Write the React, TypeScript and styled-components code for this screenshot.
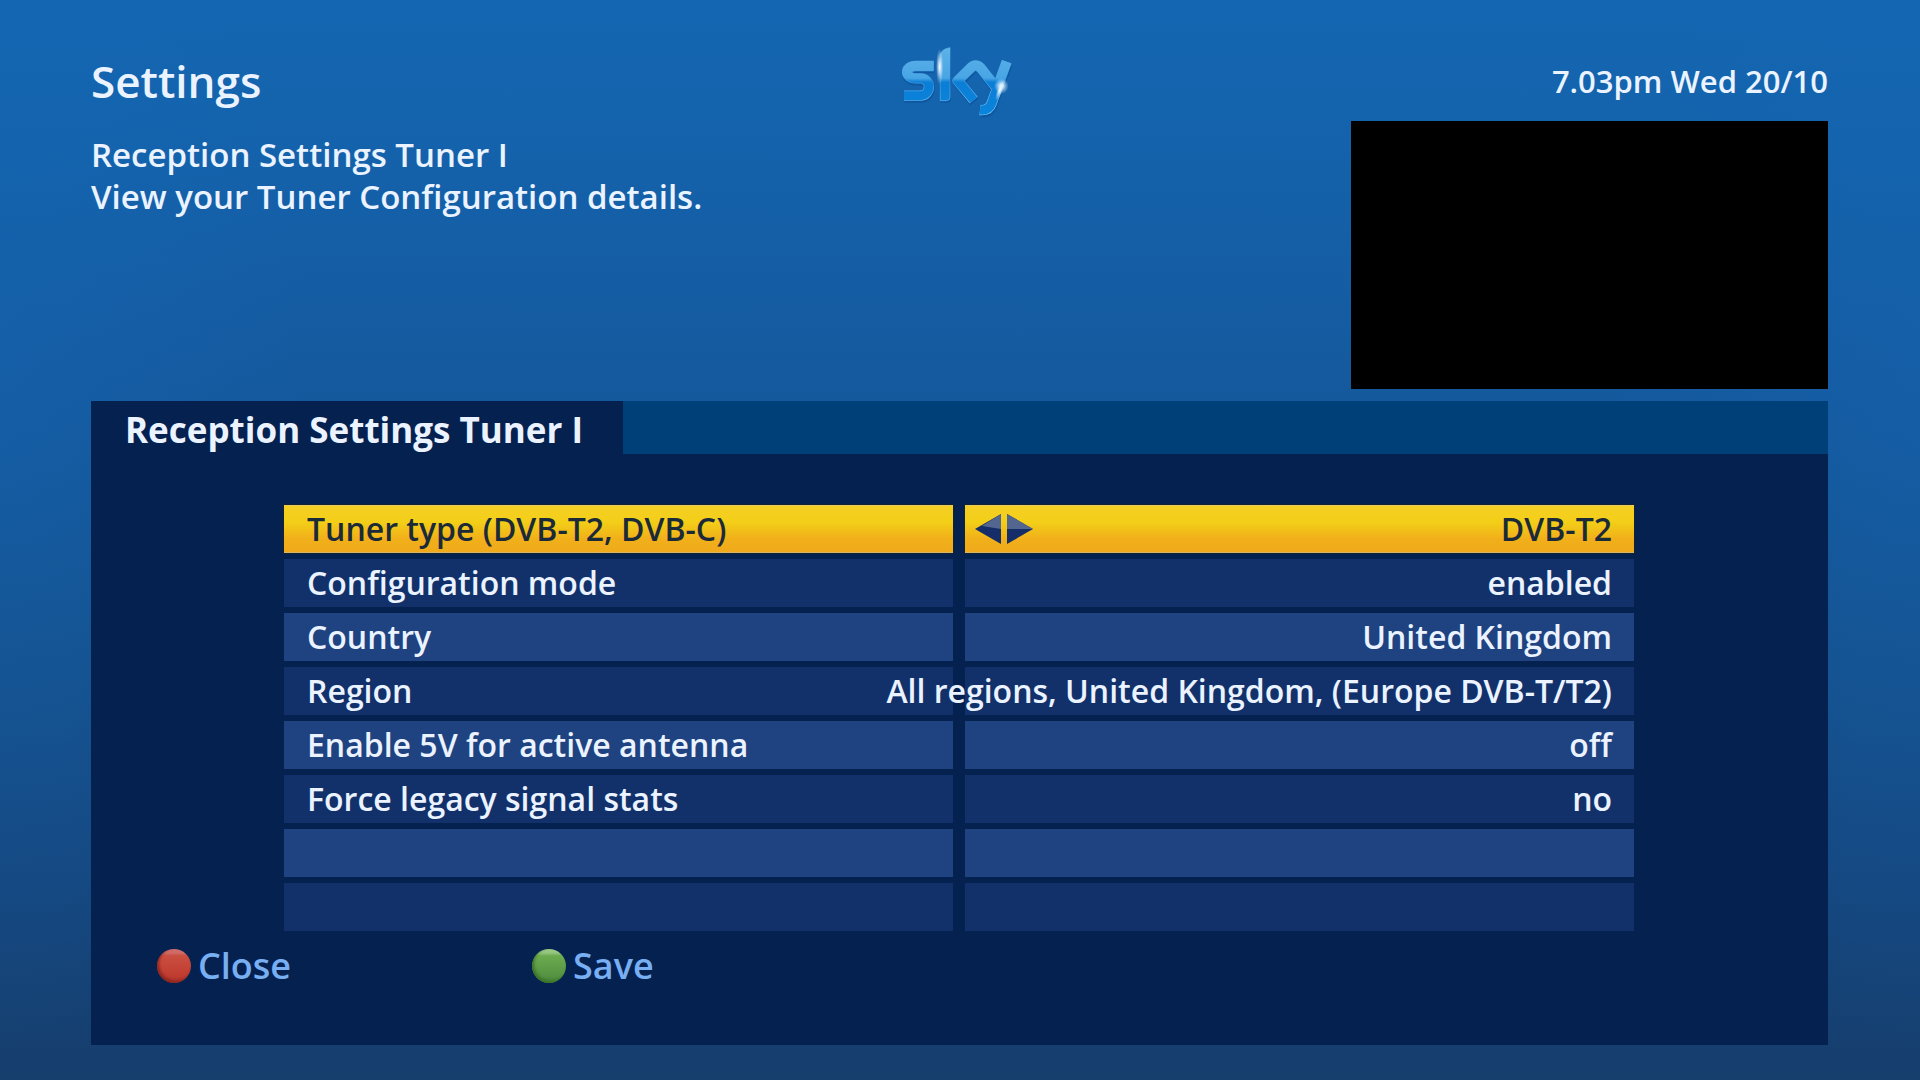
import React, { useState } from "react";
import styled, { createGlobalStyle } from "styled-components";

const GlobalStyle = createGlobalStyle`
  * { box-sizing: border-box; }
  body { margin: 0; background: #163f70; }
`;

const Screen = styled.div`
  min-height: 100vh;
  display: flex;
  flex-direction: column;
  padding: 40px 92px 35px 91px;
  color: #eaf3ff;
  font-family: "Open Sans", "Noto Sans", sans-serif;
  font-weight: 600;
  font-size: 32px;
  line-height: 42px;
  background:
    radial-gradient(ellipse 16% 60% at 0% 38%, rgba(20, 104, 184, 0.35), rgba(20, 104, 184, 0)),
    radial-gradient(ellipse 16% 60% at 100% 38%, rgba(20, 104, 184, 0.35), rgba(20, 104, 184, 0)),
    linear-gradient(180deg, #1466b2 0%, #1462ab 14%, #155a9f 34%, #15508c 60%, #15477f 80%, #163e6d 100%);
`;

const Header = styled.header`
  display: grid;
  grid-template-columns: 1fr auto 1fr;
  align-items: center;
  height: 81px;
`;

const Title = styled.h1`
  margin: 0;
  font-size: 44px;
  font-weight: 600;
`;

const Clock = styled.time`
  justify-self: end;
  font-size: 31px;
`;

const Intro = styled.section`
  display: flex;
  justify-content: space-between;
  margin-bottom: 12px;
`;

const Description = styled.p`
  margin: 0;
  padding-top: 13px;
  font-size: 33px;
`;

const Preview = styled.div`
  flex: none;
  width: 477px;
  height: 268px;
  background: #000;
`;

const Panel = styled.main`
  flex: 1;
  background: #052150;
`;

const TabBar = styled.div`
  display: flex;
  background: #004078;
`;

const Tab = styled.h2`
  margin: 0;
  padding: 4px 40px 0 34px;
  font-size: 35px;
  font-weight: 700;
  line-height: 49px;
  background: #052150;
`;

const Table = styled.table`
  display: block;
  margin: 51px 194px 0 193px;
`;

const Rows = styled.tbody`
  display: grid;
  gap: 6px;
`;

const Row = styled.tr<{ $tone: "active" | "dark" | "light" }>`
  display: grid;
  grid-template-columns: minmax(0, 1fr) minmax(0, 1fr);
  gap: 12px;
  height: 48px;
  color: ${(p) => (p.$tone === "active" ? "#1b2a38" : "#eaf3ff")};

  > * {
    background: ${(p) =>
      p.$tone === "active"
        ? "linear-gradient(180deg, #f5cf25 0%, #f3cf18 35%, #f1b01a 70%, #f0a91c 100%)"
        : p.$tone === "light"
        ? "#1f4280"
        : "#12316b"};
    box-shadow: ${(p) => (p.$tone === "active" ? "inset 0 -1px #d3b66c, inset 0 1px #e6cb62, 0 0 0 1px #16232f" : "none")};
  }
`;

const Label = styled.th`
  padding: 0 23px;
  font-weight: 600;
  line-height: 48px;
  text-align: left;
  white-space: nowrap;
`;

const Value = styled.td`
  display: flex;
  align-items: center;
  justify-content: flex-end;
  padding: 0 22px 0 10px;
  line-height: 48px;
  white-space: nowrap;
`;

const Stepper = styled.span`
  display: flex;
  gap: 6px;
  margin-right: auto;
`;

const StepButton = styled.button`
  display: block;
  padding: 0;
  border: 0;
  background: none;
  line-height: 0;
  cursor: pointer;
`;

const Footer = styled.footer`
  display: flex;
  padding: 13px 66px 0;
`;

const KeyButton = styled.button`
  display: flex;
  align-items: center;
  gap: 7px;
  width: 375px;
  padding: 0;
  border: 0;
  background: none;
  color: #78aef2;
  font: inherit;
  font-size: 36px;
  line-height: 44px;
  cursor: pointer;
`;

const KeyDot = styled.span<{ $color: "red" | "green" }>`
  width: 34px;
  height: 34px;
  border-radius: 50%;
  background: ${(p) =>
    p.$color === "red"
      ? "linear-gradient(180deg, #d07070 0%, #cf6a66 12%, #c94f40 20%, #c03c30 80%, #a33025 100%)"
      : "linear-gradient(180deg, #9fcc8c 0%, #93c47e 12%, #6cab4e 20%, #559343 80%, #43802f 100%)"};
  box-shadow: inset 2px -2px 3px ${(p) => (p.$color === "red" ? "#8c2620" : "#3b742b")};
`;

function Logo() {
  return (
    <svg width="116" height="74" viewBox="66 42 348 222" role="img" aria-label="Sky">
      <defs>
        <linearGradient id="gloss" gradientUnits="userSpaceOnUse" x1="0" y1="50" x2="0" y2="255">
          <stop offset="0" stopColor="#5db2e8" />
          <stop offset="0.46" stopColor="#48a5e4" />
          <stop offset="0.52" stopColor="#0b7ed6" />
          <stop offset="1" stopColor="#0a84dc" />
        </linearGradient>
        <linearGradient id="rim" gradientUnits="userSpaceOnUse" x1="0" y1="50" x2="0" y2="255">
          <stop offset="0" stopColor="#68baec" />
          <stop offset="0.5" stopColor="#3b9be0" />
          <stop offset="1" stopColor="#7fd0fa" />
        </linearGradient>
        <radialGradient id="flare">
          <stop offset="0" stopColor="#fff" />
          <stop offset="0.35" stopColor="#e4f4ff" stopOpacity="0.75" />
          <stop offset="1" stopColor="#bfe4ff" stopOpacity="0" />
        </radialGradient>
        <g id="strokes" fill="none" strokeLinejoin="round">
          <path d="M161 108H108C72 108 72 145 108 145H122C156 146 154 197 120 197H72" />
          <path d="M281 210L233 152L272 114Q287 99 302 114L345 168" />
          <path d="M380 95L335 220Q327 243 300 240" />
        </g>
      </defs>
      <g opacity="0.5" transform="translate(2 6)">
        <use href="#strokes" stroke="#0b4f96" strokeWidth="32" />
        <path d="M179 213V76Q180 56 211 51V202Q211 212 200 213Z" fill="#0b4f96" />
      </g>
      <use href="#strokes" stroke="url(#rim)" strokeWidth="31" />
      <use href="#strokes" stroke="url(#gloss)" strokeWidth="27" />
      <path
        d="M181 212V76Q182 58 210 53V202Q210 211 200 212Z"
        fill="url(#gloss)"
        stroke="url(#rim)"
        strokeWidth="2"
      />
      <ellipse cx="179" cy="110" rx="11" ry="54" fill="url(#flare)" />
      <ellipse cx="364" cy="168" rx="22" ry="24" fill="url(#flare)" />
      <ellipse cx="360" cy="180" rx="9" ry="34" fill="url(#flare)" transform="rotate(20 360 180)" />
    </svg>
  );
}

function Arrow({ right }: { right?: boolean }) {
  return (
    <svg width="26" height="30" viewBox="0 0 26 30" aria-hidden="true">
      <g transform={right ? "matrix(-1 0 0 1 26 0)" : undefined}>
        <path d="M26 0V30L0 15Z" fill="#152d68" />
        <path d={right ? "M26 0V15H0Z" : "M26 0V15L7 12Z"} fill="#536690" />
      </g>
    </svg>
  );
}

const tunerTypes = ["DVB-T2", "DVB-C"];

const settings = [
  ["Configuration mode", "enabled"],
  ["Country", "United Kingdom"],
  ["Region", "All regions, United Kingdom, (Europe DVB-T/T2)"],
  ["Enable 5V for active antenna", "off"],
  ["Force legacy signal stats", "no"],
  ["", ""],
  ["", ""],
];

export default function App() {
  const [tuner, setTuner] = useState(0);
  const step = () => setTuner((t) => (t + 1) % tunerTypes.length);

  return (
    <>
      <GlobalStyle />
      <Screen>
        <Header>
          <Title>Settings</Title>
          <Logo />
          <Clock>7.03pm Wed 20/10</Clock>
        </Header>
        <Intro>
          <Description>
            Reception Settings Tuner I
            <br />
            View your Tuner Configuration details.
          </Description>
          <Preview />
        </Intro>
        <Panel>
          <TabBar>
            <Tab>Reception Settings Tuner I</Tab>
          </TabBar>
          <Table>
            <Rows>
              <Row $tone="active">
                <Label scope="row">Tuner type (DVB-T2, DVB-C)</Label>
                <Value>
                  <Stepper>
                    <StepButton type="button" aria-label="Previous tuner type" onClick={step}>
                      <Arrow />
                    </StepButton>
                    <StepButton type="button" aria-label="Next tuner type" onClick={step}>
                      <Arrow right />
                    </StepButton>
                  </Stepper>
                  {tunerTypes[tuner]}
                </Value>
              </Row>
              {settings.map(([label, value], i) => (
                <Row key={i} $tone={i % 2 ? "light" : "dark"}>
                  <Label scope="row">{label}</Label>
                  <Value>{value}</Value>
                </Row>
              ))}
            </Rows>
          </Table>
          <Footer>
            <KeyButton type="button">
              <KeyDot $color="red" />
              Close
            </KeyButton>
            <KeyButton type="button">
              <KeyDot $color="green" />
              Save
            </KeyButton>
          </Footer>
        </Panel>
      </Screen>
    </>
  );
}
